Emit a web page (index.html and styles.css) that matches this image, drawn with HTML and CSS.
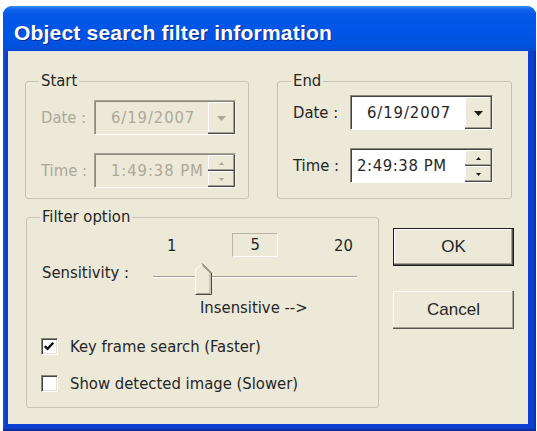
FILE: index.html
```html
<!DOCTYPE html>
<html>
<head>
<meta charset="utf-8">
<link rel="stylesheet" href="styles.css">
</head>
<body>
<div class="window">
  <div class="titlebar">Object search filter information</div>
  <div class="client">
    <div class="top-row">
      <fieldset class="group group-start is-disabled">
        <legend>Start</legend>
        <div class="field-grid">
          <span class="lbl">Date :</span>
          <div class="field">
            <span class="val">6/19/2007</span>
            <span class="drop"><svg width="9" height="5" viewBox="0 0 9 5"><path d="M0 0h9L4.5 5z"/></svg></span>
          </div>
          <span class="lbl">Time :</span>
          <div class="field">
            <span class="val">1:49:38 PM</span>
            <span class="spinner">
              <span class="sp"><svg width="5" height="3" viewBox="0 0 5 3"><path d="M0 3h5L2.5 0z"/></svg></span>
              <span class="sp"><svg width="5" height="3" viewBox="0 0 5 3"><path d="M0 0h5L2.5 3z"/></svg></span>
            </span>
          </div>
        </div>
      </fieldset>
      <fieldset class="group group-end">
        <legend>End</legend>
        <div class="field-grid">
          <span class="lbl">Date :</span>
          <div class="field">
            <span class="val">6/19/2007</span>
            <span class="drop"><svg width="9" height="5" viewBox="0 0 9 5"><path d="M0 0h9L4.5 5z"/></svg></span>
          </div>
          <span class="lbl">Time :</span>
          <div class="field">
            <span class="val val-time">2:49:38 PM</span>
            <span class="spinner">
              <span class="sp"><svg width="5" height="3" viewBox="0 0 5 3"><path d="M0 3h5L2.5 0z"/></svg></span>
              <span class="sp"><svg width="5" height="3" viewBox="0 0 5 3"><path d="M0 0h5L2.5 3z"/></svg></span>
            </span>
          </div>
        </div>
      </fieldset>
    </div>
    <div class="bottom-row">
      <fieldset class="group group-filter">
        <legend>Filter option</legend>
        <div class="sens-grid">
          <span></span>
          <div class="scale"><span>1</span><span class="valbox">5</span><span>20</span></div>
          <span class="lbl sens-lbl">Sensitivity :</span>
          <div class="slider">
            <div class="track"></div>
            <svg class="thumb" style="left:42px" width="17" height="33" viewBox="0 0 17 33">
              <path d="M0.5 32.5V8L7 1.5L16.5 11V32.5Z" fill="#ece9d8"/>
              <path d="M0.5 32V8L7 1.5" fill="none" stroke="#ffffff"/>
              <path d="M7 1.5L16.5 11V32.5H0.5" fill="none" stroke="#4a4944"/>
              <path d="M7.5 3.5L15 11V31.5H1.5" fill="none" stroke="#a7a497"/>
            </svg>
          </div>
          <span></span>
          <div class="hint">Insensitive --&gt;</div>
        </div>
        <div class="check first">
          <span class="box"><svg width="17" height="17" viewBox="0 0 17 17"><path d="M4 8l3 3l6-6.5" fill="none" stroke="#111" stroke-width="2.6"/></svg></span>
          <span>Key frame search (Faster)</span>
        </div>
        <div class="check">
          <span class="box"></span>
          <span>Show detected image (Slower)</span>
        </div>
      </fieldset>
      <div class="buttons">
        <div class="btn default">OK</div>
        <div class="btn">Cancel</div>
      </div>
    </div>
  </div>
</div>
</body>
</html>
```

FILE: styles.css
```css
html, body {
  margin: 0;
  background: #ffffff;
}

body {
  padding: 6px 0 0 3px;
  font-family: "DejaVu Sans Condensed", "Liberation Sans", sans-serif;
  font-size: 16.5px;
  color: #262626;
}

.window {
  width: 533px;
  height: 425px;
  box-sizing: border-box;
  display: flex;
  flex-direction: column;
  background: linear-gradient(to right, #1a4fd8 0, #0a3fd0 3px, #0a3fd0 calc(100% - 3px), #0b2ca8 100%);
  border-radius: 9px 9px 0 0;
  box-shadow: inset 0 -2px 0 #102c96;
}

.titlebar {
  height: 45px;
  box-sizing: border-box;
  padding: 8px 0 0 11px;
  border-radius: 9px 9px 0 0;
  background: linear-gradient(to bottom, #3d8ff7 0, #1268ee 3px, #0558e8 8px, #0055e6 60%, #0251dd 92%, #0a47c9 100%);
  color: #ffffff;
  font-family: "Liberation Sans", sans-serif;
  font-weight: bold;
  font-size: 21px;
  line-height: 37px;
  letter-spacing: 0.2px;
  text-shadow: 1px 1px 0 #0b2a9a;
}

.client {
  flex: 1;
  margin: 0 8px 7px 5px;
  box-sizing: border-box;
  padding: 22px 0 0 17px;
  background: #ece9d8;
  box-shadow: inset 0 1px 0 #dfe6f4;
}

.top-row {
  display: flex;
  gap: 28px;
}

.group {
  margin: 0;
  box-sizing: border-box;
  border: 1px solid #c6c3b5;
  border-radius: 3px;
  min-width: 0;
}

.group legend {
  padding: 0 2px;
  margin-left: -2px;
  line-height: 16px;
  color: #262626;
}

.group-start {
  width: 224px;
  height: 126px;
  padding: 11px 12px 0 15px;
}

.group-end {
  width: 235px;
  height: 126px;
  padding: 6px 17px 0 15px;
}

.field-grid {
  display: grid;
  row-gap: 18px;
  align-items: center;
}

.group-start .field-grid {
  grid-template-columns: 53px 142px;
}

.group-end .field-grid {
  grid-template-columns: 57px 143px;
}

.lbl {
  white-space: nowrap;
}

.field {
  height: 35px;
  box-sizing: border-box;
  display: flex;
  background: #ffffff;
  border: 1px solid;
  border-color: #8a877b #f4f3ee #ffffff #8a877b;
  box-shadow: inset 1px 1px 0 #44433f;
}

.val {
  flex: 1;
  padding: 1px 0 0 16px;
  line-height: 32px;
  letter-spacing: 0.9px;
  white-space: nowrap;
}

.val-time {
  padding-left: 6px;
  letter-spacing: 0.6px;
}

.drop {
  width: 27px;
  box-sizing: border-box;
  margin-top: 1px;
  display: flex;
  align-items: center;
  justify-content: center;
  background: #ece9d8;
  box-shadow: inset -1px -1px 0 #4a4944, inset -2px -2px 0 #a7a497, inset 1px 1px 0 #ffffff;
}

.drop svg {
  fill: #1a1a1a;
}

.spinner {
  width: 27px;
  margin-top: 1px;
  display: flex;
  flex-direction: column;
}

.sp {
  flex: 1;
  display: flex;
  align-items: center;
  justify-content: center;
  background: #ece9d8;
  box-shadow: inset -1px -1px 0 #4a4944, inset -2px -2px 0 #a7a497, inset 1px 1px 0 #ffffff;
}

.sp svg {
  fill: #1a1a1a;
}

.is-disabled .lbl,
.is-disabled .val {
  color: #aca899;
}

.is-disabled .field {
  background: #ece9d8;
  border-color: #a6a397 #f4f3ee #ffffff #a6a397;
  box-shadow: inset 1px 1px 0 #8b897f;
}

.is-disabled .drop svg,
.is-disabled .sp svg {
  fill: #aca899;
}

.bottom-row {
  display: flex;
  align-items: flex-start;
  margin-top: 10px;
}

.group-filter {
  width: 353px;
  height: 199px;
  margin-left: 1px;
  padding: 8px 0 0 15px;
}

.sens-grid {
  display: grid;
  grid-template-columns: 111px 204px;
}

.scale {
  height: 24px;
  display: flex;
  align-items: center;
  justify-content: space-between;
  padding: 0 4px 0 14px;
}

.valbox {
  width: 46px;
  height: 24px;
  box-sizing: border-box;
  border: 1px solid;
  border-color: #b9b6a9 #ffffff #ffffff #b9b6a9;
  text-align: center;
  line-height: 22px;
}

.sens-lbl {
  margin-top: 5px;
  line-height: 22px;
}

.slider {
  position: relative;
  height: 33px;
  margin-top: 5px;
}

.track {
  position: absolute;
  left: 0;
  right: 0;
  top: 14px;
  height: 1px;
  background: #9f9c90;
  border-bottom: 1px solid #ffffff;
}

.thumb {
  position: absolute;
  top: 0;
}

.hint {
  margin-top: 2px;
  padding-left: 47px;
  line-height: 22px;
  white-space: nowrap;
}

.check {
  display: flex;
  align-items: center;
  gap: 12px;
  height: 22px;
  margin-left: -1px;
  margin-top: 15px;
  white-space: nowrap;
}

.check.first {
  margin-top: 16px;
}

.box {
  width: 17px;
  height: 17px;
  box-sizing: border-box;
  background: #ffffff;
  border: 1px solid;
  border-color: #8a877b #ffffff #ffffff #8a877b;
  box-shadow: inset 1px 1px 0 #44433f, inset -1px -1px 0 #e3e0d3;
  display: flex;
}

.box svg {
  margin: -1px 0 0 -1px;
}

.buttons {
  display: flex;
  flex-direction: column;
  gap: 25px;
  margin: 19px 0 0 14px;
}

.btn {
  width: 121px;
  height: 38px;
  box-sizing: border-box;
  display: flex;
  align-items: center;
  justify-content: center;
  background: #ece9d8;
  font-family: "Liberation Sans", sans-serif;
  font-size: 17px;
  color: #262626;
  box-shadow: inset -1px -1px 0 #55544f, inset -2px -2px 0 #a7a497, inset 1px 1px 0 #ffffff;
}

.btn.default {
  border: 1px solid #1c1c1c;
}
```
